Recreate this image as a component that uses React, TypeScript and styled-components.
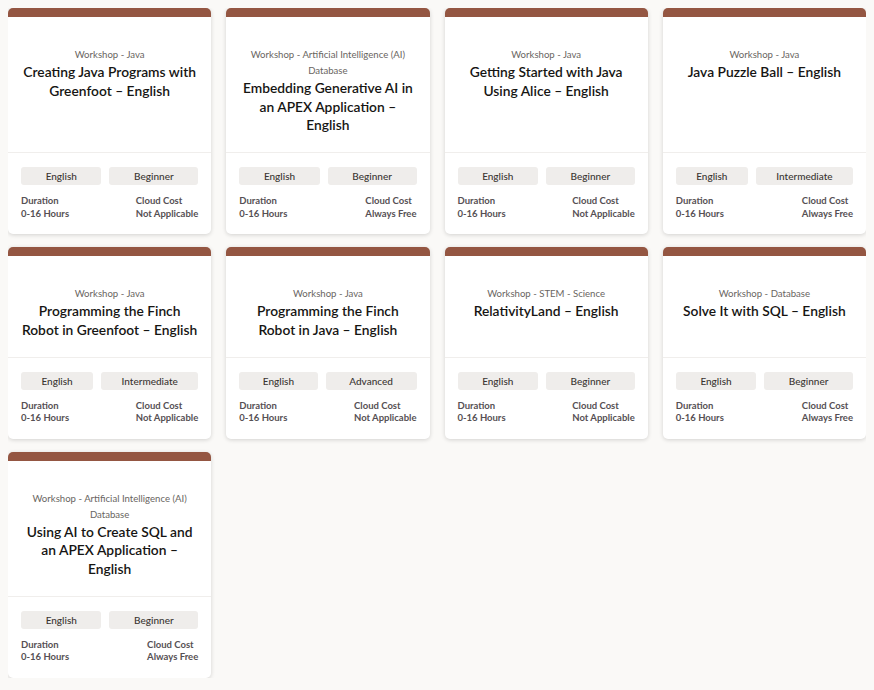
import type { FC } from "react"
import styled, { createGlobalStyle } from "styled-components"

const GlobalStyle = createGlobalStyle`
  html, body {
    background-color: rgb(250, 249, 247);
  }
  body {
    margin: 8px;
    font-family: Lato, "Noto Sans", sans-serif;
    color: rgb(22, 21, 19);
  }
`

const Grid = styled.div`
  display: grid;
  grid-template-columns: repeat(4, 1fr);
  column-gap: 15px;
  row-gap: 13px;
  align-items: stretch;
`

const Card = styled.article`
  display: flex;
  flex-direction: column;
  background-color: rgb(255, 255, 255);
  border-radius: 5px;
  overflow: hidden;
  box-shadow: 0 1px 4px rgba(0, 0, 0, 0.16);
  border-top: 9px solid rgb(148, 86, 66);
`

const Header = styled.div`
  flex: 1;
  padding: 30px 12px 17px 12px;
  text-align: center;
  border-bottom: 1px solid rgb(240, 238, 236);
`

const Category = styled.div`
  font-size: 9.6px;
  line-height: 16px;
  color: rgb(105, 101, 97);
`

const Title = styled.h3`
  margin: 0;
  font-size: 13.8px;
  line-height: 18.7px;
  font-weight: 600;
  color: rgb(22, 21, 19);
`

const Footer = styled.div`
  padding: 14px 13px 14px 13px;
`

const Tags = styled.div`
  display: flex;
  gap: 8px;
`

const Tag = styled.span`
  flex: 1 1 auto;
  height: 18px;
  line-height: 18px;
  padding: 0 12px;
  border-radius: 3px;
  background-color: rgb(239, 237, 235);
  text-align: center;
  font-size: 10px;
  font-weight: 500;
  color: rgb(58, 53, 50);
`

const Details = styled.div`
  display: flex;
  justify-content: space-between;
  margin-top: 10px;
`

const Detail = styled.div`
  font-size: 9.5px;
  line-height: 12.5px;
  font-weight: 700;
  color: rgb(86, 80, 84);
`

type Workshop = {
  category: string
  title: string
  level: string
  cost: string
}

const workshops: Workshop[] = [
  {
    category: "Workshop - Java",
    title: "Creating Java Programs with Greenfoot – English",
    level: "Beginner",
    cost: "Not Applicable",
  },
  {
    category: "Workshop - Artificial Intelligence (AI) Database",
    title: "Embedding Generative AI in an APEX Application – English",
    level: "Beginner",
    cost: "Always Free",
  },
  {
    category: "Workshop - Java",
    title: "Getting Started with Java Using Alice – English",
    level: "Beginner",
    cost: "Not Applicable",
  },
  {
    category: "Workshop - Java",
    title: "Java Puzzle Ball – English",
    level: "Intermediate",
    cost: "Always Free",
  },
  {
    category: "Workshop - Java",
    title: "Programming the Finch Robot in Greenfoot – English",
    level: "Intermediate",
    cost: "Not Applicable",
  },
  {
    category: "Workshop - Java",
    title: "Programming the Finch Robot in Java – English",
    level: "Advanced",
    cost: "Not Applicable",
  },
  {
    category: "Workshop - STEM - Science",
    title: "RelativityLand – English",
    level: "Beginner",
    cost: "Not Applicable",
  },
  {
    category: "Workshop - Database",
    title: "Solve It with SQL – English",
    level: "Beginner",
    cost: "Always Free",
  },
  {
    category: "Workshop - Artificial Intelligence (AI) Database",
    title: "Using AI to Create SQL and an APEX Application – English",
    level: "Beginner",
    cost: "Always Free",
  },
]

const WorkshopCard: FC<{ workshop: Workshop }> = ({ workshop }) => (
  <Card>
    <Header>
      <Category>{workshop.category}</Category>
      <Title>{workshop.title}</Title>
    </Header>
    <Footer>
      <Tags>
        <Tag>English</Tag>
        <Tag>{workshop.level}</Tag>
      </Tags>
      <Details>
        <Detail>
          Duration
          <br />
          0-16 Hours
        </Detail>
        <Detail>
          Cloud Cost
          <br />
          {workshop.cost}
        </Detail>
      </Details>
    </Footer>
  </Card>
)

const App: FC = () => (
  <>
    <GlobalStyle />
    <Grid>
      {workshops.map((w) => (
        <WorkshopCard key={w.title} workshop={w} />
      ))}
    </Grid>
  </>
)

export default App
